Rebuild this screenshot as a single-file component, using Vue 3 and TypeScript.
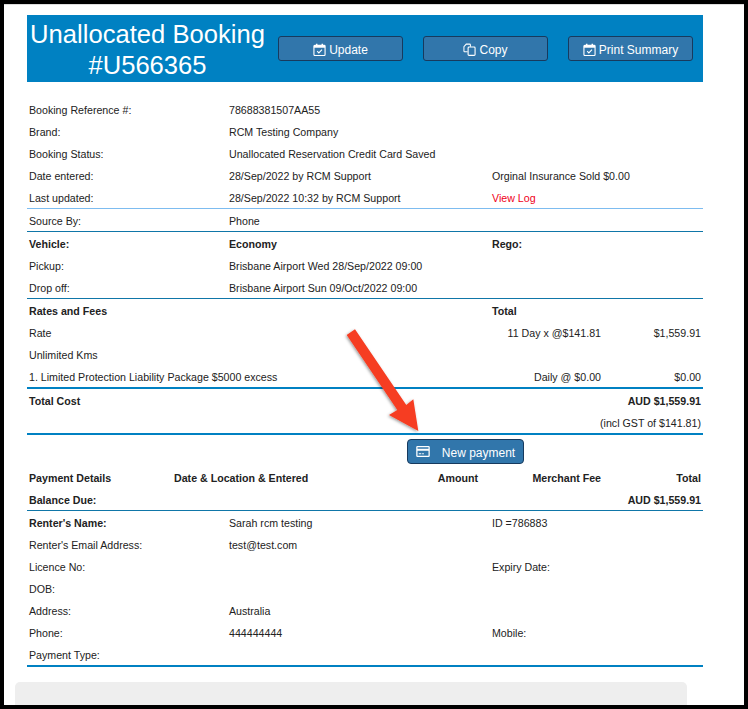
<script setup lang="ts">
interface Cell { text: string; bold?: boolean; red?: boolean }
interface Row { a: string; b?: string; c?: string; bold?: boolean; redC?: boolean; boldB?: boolean }

const top: Row[] = [
  { a: 'Booking Reference #:', b: '78688381507AA55' },
  { a: 'Brand:', b: 'RCM Testing Company' },
  { a: 'Booking Status:', b: 'Unallocated Reservation Credit Card Saved' },
  { a: 'Date entered:', b: '28/Sep/2022 by RCM Support', c: 'Orginal Insurance Sold $0.00' },
  { a: 'Last updated:', b: '28/Sep/2022 10:32 by RCM Support', c: 'View Log', redC: true },
]
const vehicle: Row[] = [
  { a: 'Vehicle:', b: 'Economy', c: 'Rego:', bold: true },
  { a: 'Pickup:', b: 'Brisbane Airport Wed 28/Sep/2022 09:00' },
  { a: 'Drop off:', b: 'Brisbane Airport Sun 09/Oct/2022 09:00' },
]
const renter: Row[] = [
  { a: "Renter's Name:", b: 'Sarah rcm testing', c: 'ID =786883' },
  { a: "Renter's Email Address:", b: 'test@test.com' },
  { a: 'Licence No:', c: 'Expiry Date:' },
  { a: 'DOB:' },
  { a: 'Address:', b: 'Australia' },
  { a: 'Phone:', b: '444444444', c: 'Mobile:' },
  { a: 'Payment Type:' },
]
const paymentHead: Cell[] = [
  { text: 'Date & Location & Entered' },
  { text: 'Amount' },
  { text: 'Merchant Fee' },
  { text: 'Total' },
]
</script>

<template>
  <div class="frame">
    <div class="page">
      <header class="banner">
        <h1 class="title"><span>Unallocated Booking</span><span>#U566365</span></h1>
        <div class="actions">
          <button class="btn">
            <svg class="ico" viewBox="0 0 14 14"><path d="M2 2.500h10a1 1 0 0 1 1 1v9a1 1 0 0 1-1 1H2a1 1 0 0 1-1-1v-9a1 1 0 0 1 1-1z" fill="none" stroke="currentColor" stroke-width="1.200"/><path d="M1 2.500h12v2.600H1z" fill="currentColor"/><path d="M4 .8v2.500M10 .8v2.500" stroke="currentColor" stroke-width="1.600"/><path d="M4.500 8.800l1.800 1.800 3.400-3.400" fill="none" stroke="currentColor" stroke-width="1.200"/></svg>
            Update
          </button>
          <button class="btn">
            <svg class="ico" viewBox="0 0 14 14"><path d="M5 9.500H2a1 1 0 0 1-1-1V4l2.500-2.800H7a1 1 0 0 1 1 1V4" fill="none" stroke="currentColor" stroke-width="1.100"/><rect x="5.500" y="4.300" width="7.500" height="9" rx="1" fill="none" stroke="currentColor" stroke-width="1.200"/></svg>
            Copy
          </button>
          <button class="btn">
            <svg class="ico" viewBox="0 0 14 14"><path d="M2 2.500h10a1 1 0 0 1 1 1v9a1 1 0 0 1-1 1H2a1 1 0 0 1-1-1v-9a1 1 0 0 1 1-1z" fill="none" stroke="currentColor" stroke-width="1.200"/><path d="M1 2.500h12v2.600H1z" fill="currentColor"/><path d="M4 .8v2.500M10 .8v2.500" stroke="currentColor" stroke-width="1.600"/><path d="M4.500 8.800l1.800 1.800 3.400-3.400" fill="none" stroke="currentColor" stroke-width="1.200"/></svg>
            Print Summary
          </button>
        </div>
      </header>

      <section class="details">
        <div class="group light">
          <div v-for="r in top" :key="r.a" class="row">
            <span>{{ r.a }}</span><span>{{ r.b }}</span><span :class="{ red: r.redC }">{{ r.c }}</span>
          </div>
        </div>
        <div class="group">
          <div class="row"><span>Source By:</span><span>Phone</span><span></span></div>
        </div>
        <div class="group">
          <div v-for="r in vehicle" :key="r.a" class="row" :class="{ bold: r.bold }">
            <span>{{ r.a }}</span><span>{{ r.b }}</span><span>{{ r.c }}</span>
          </div>
        </div>
        <div class="group thick">
          <div class="row bold"><span>Rates and Fees</span><span></span><span>Total</span></div>
          <div class="row fee"><span>Rate</span><span class="r">11 Day x @$141.81</span><span class="r">$1,559.91</span></div>
          <div class="row fee"><span>Unlimited Kms</span><span></span><span></span></div>
          <div class="row fee"><span>1. Limited Protection Liability Package $5000 excess</span><span class="r">Daily @ $0.00</span><span class="r">$0.00</span></div>
        </div>
        <div class="group thick">
          <div class="row total bold"><span>Total Cost</span><span class="r">AUD $1,559.91</span></div>
          <div class="row total"><span></span><span class="r">(incl GST of $141.81)</span></div>
        </div>

        <div class="pay-action">
          <button class="btn pay">
            <svg class="card" viewBox="0 0 16 13"><path fill-rule="evenodd" d="M1.500 0h13A1.500 1.500 0 0 1 16 1.500v10a1.500 1.500 0 0 1-1.500 1.500h-13A1.500 1.500 0 0 1 0 11.500v-10A1.500 1.500 0 0 1 1.500 0zM1.500 1.500V3.200h13V1.500zM1.500 5.600v5.900h13V5.600zM3 8.500h3v1.200H3zM7 8.500h2v1.200H7z" fill="currentColor"/></svg>
            <span>New payment</span>
          </button>
        </div>

        <div class="group">
          <div class="row pay-head bold">
            <span>Payment Details</span>
            <span v-for="(c, i) in paymentHead" :key="c.text" :class="{ r: i > 0 }">{{ c.text }}</span>
          </div>
          <div class="row total bold"><span>Balance Due:</span><span class="r">AUD $1,559.91</span></div>
        </div>
        <div class="group thick">
          <div v-for="(r, i) in renter" :key="r.a" class="row">
            <span :class="{ b: i === 0 }">{{ r.a }}</span><span>{{ r.b }}</span><span>{{ r.c }}</span>
          </div>
        </div>
      </section>

      <div class="panel"></div>

      <svg class="arrow" viewBox="0 0 748 709" width="748" height="709">
        <defs>
          <filter id="arrow-shadow" x="-20%" y="-20%" width="140%" height="140%">
            <feDropShadow dx="-1" dy="1" stdDeviation="1.500" flood-color="#000" flood-opacity=".4"/>
          </filter>
        </defs>
        <path d="M346.700 335L355 329.300L406.300 405L413.300 399.300L418.300 431L389 415L397.300 410Z" fill="#f63c21" filter="url(#arrow-shadow)"/>
      </svg>
    </div>
  </div>
</template>

<style>
html, body { margin: 0; background: #000; }
</style>

<style scoped>
.frame {
  position: relative;
  box-sizing: border-box;
  width: 748px;
  height: 709px;
  border: 4px solid #000;
  overflow: hidden;
  background: #fff;
  font-family: "Liberation Sans", Arial, sans-serif;
  font-size: 10.65px;
  color: #222;
}
.page {
  box-sizing: border-box;
  height: 100%;
  border-top: 1px solid #ddd;
  padding-top: 10px;
}
.banner {
  box-sizing: border-box;
  width: 676px;
  height: 67px;
  margin-left: 23px;
  background: #0081c2;
  display: flex;
  align-items: center;
}
.title {
  width: 241px;
  margin: 0;
  padding-top: 2px;
  flex: none;
  font-size: 25.6px;
  line-height: 31px;
  font-weight: 400;
  text-align: center;
  color: #fff;
  white-space: nowrap;
}
.title span { display: block; }
.actions {
  display: flex;
  gap: 20px;
  margin-left: 10px;
}
.btn {
  box-sizing: border-box;
  width: 125px;
  height: 25px;
  padding: 2px 0 0;
  display: flex;
  align-items: center;
  justify-content: center;
  gap: 3px;
  background: #3176ab;
  border: 1px solid #173a5e;
  border-radius: 3px;
  color: #fff;
  font: 12px "Liberation Sans", Arial, sans-serif;
}
.ico { width: 13px; height: 13px; margin-top: -1px; }
.details {
  width: 676px;
  margin: 17px 0 0 23px;
}
.group::after {
  content: "";
  display: block;
  height: 1px;
  margin: -1px 0 1px;
  background: #0f76a8;
}
.group.light::after { background: #7dbcf0; }
.group.thick::after { height: 2px; background: #0081c2; }
.row {
  box-sizing: border-box;
  height: 22px;
  padding: 0 2px;
  display: grid;
  grid-template-columns: 200px 263px 1fr;
  align-items: center;
  white-space: nowrap;
}
.row.fee { grid-template-columns: 1fr 100px 100px; }
.row.total { grid-template-columns: 1fr auto; }
.row.pay-head { grid-template-columns: 145px 150px 1fr 123px 100px; }
.bold, .b { font-weight: 700; }
.r { text-align: right; }
.red { color: #f00020; }
.pay-action {
  box-sizing: border-box;
  height: 31px;
  padding: 3px 0 0 201px;
  display: flex;
  justify-content: center;
  align-items: flex-start;
}
.btn.pay {
  width: 117px;
  height: 25px;
  gap: 12px;
  border-radius: 4px;
}
.card { width: 14px; height: 11px; margin-top: -2px; }
.panel {
  width: 672px;
  height: 40px;
  margin: 15px 0 0 11px;
  background: #eee;
  border-radius: 5px;
}
.arrow {
  position: absolute;
  left: -4px;
  top: -4px;
  pointer-events: none;
}
</style>
